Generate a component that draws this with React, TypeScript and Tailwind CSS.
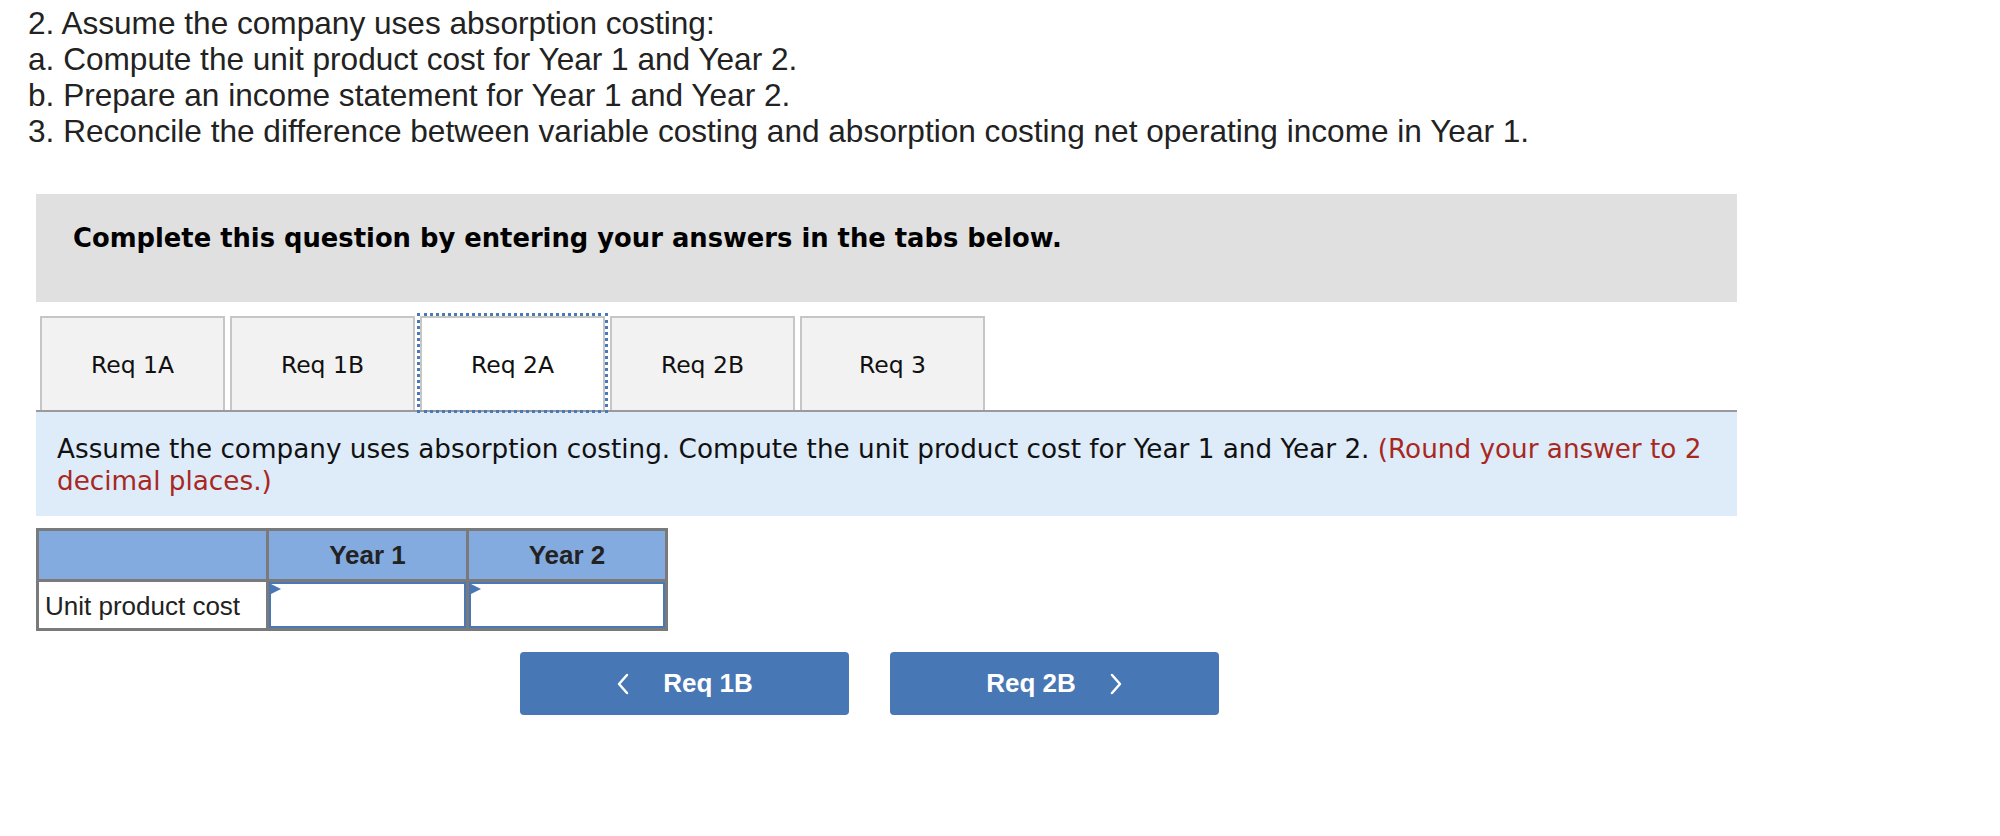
import React from "react";

function Chevron({ dir }: { dir: "left" | "right" }) {
  return (
    <svg width="14" height="22" viewBox="0 0 14 22" fill="none">
      {dir === "left" ? (
        <polyline points="11,2 3,11 11,20" stroke="white" strokeWidth="2.5" strokeLinecap="round" strokeLinejoin="round" />
      ) : (
        <polyline points="3,2 11,11 3,20" stroke="white" strokeWidth="2.5" strokeLinecap="round" strokeLinejoin="round" />
      )}
    </svg>
  );
}

function Tab({ label, active }: { label: string; active?: boolean }) {
  return (
    <div
      className={
        active
          ? "flex h-[94px] w-[185px] items-center justify-center border-2 border-b-0 border-[#c6c6c6] bg-white pt-[4px] outline-[3px] outline-dotted outline-[#4a78b8] outline-offset-0"
          : "flex h-[94px] w-[185px] items-center justify-center border-2 border-b-0 border-[#c6c6c6] bg-[#f2f2f2] pt-[4px]"
      }
    >
      <span className="font-['DejaVu_Sans',Verdana,sans-serif] text-[23.5px] text-[#111]">{label}</span>
    </div>
  );
}

function InputCell() {
  return (
    <div className="relative h-full w-full border-2 border-[#4a78b5] bg-white">
      <div className="absolute left-0 top-0 h-0 w-0 border-y-[5px] border-l-[10px] border-y-transparent border-l-[#4a78b5]" />
    </div>
  );
}

export default function App() {
  return (
    <div className="min-h-[836px] w-[2000px] bg-white">
      <div className="pl-[28px] pt-[5px] font-['Liberation_Sans',Arial,sans-serif] text-[31.6px] leading-[36px] text-[#222]">
        <div>2. Assume the company uses absorption costing:</div>
        <div>a. Compute the unit product cost for Year 1 and Year 2.</div>
        <div>b. Prepare an income statement for Year 1 and Year 2.</div>
        <div>3. Reconcile the difference between variable costing and absorption costing net operating income in Year 1.</div>
      </div>

      <div className="ml-[36px] mt-[45px] w-[1701px]">
        <div className="h-[108px] bg-[#e0e0e0] pl-[37px] pt-[28px]">
          <div className="font-['DejaVu_Sans',Verdana,sans-serif] text-[25.8px] font-bold leading-[32px] text-black">
            Complete this question by entering your answers in the tabs below.
          </div>
        </div>

        <div className="mt-[14px] flex gap-[5px] border-b-2 border-[#9a9a9a] pl-[4px]">
          <Tab label="Req 1A" />
          <Tab label="Req 1B" />
          <Tab label="Req 2A" active />
          <Tab label="Req 2B" />
          <Tab label="Req 3" />
        </div>

        <div className="bg-[#deebf8] pb-[19px] pl-[21px] pr-[20px] pt-[21px] font-['DejaVu_Sans',Verdana,sans-serif] text-[26.25px] leading-[32px] text-[#111]">
          <p>
            Assume the company uses absorption costing. Compute the unit product cost for Year 1 and Year 2.{" "}
            <span className="text-[#a8281f]">(Round your answer to 2 decimal places.)</span>
          </p>
        </div>

        <div className="mt-[12px] w-[632px] border-[3px] border-[#7a7a7a] font-['Liberation_Sans',Arial,sans-serif] text-[26px] text-[#222]">
          <div className="flex h-[48px] bg-[#84abdf] font-bold">
            <div className="w-[227px]" />
            <div className="w-[3px] bg-[#7a7a7a]" />
            <div className="flex w-[197px] items-center justify-center">Year 1</div>
            <div className="w-[3px] bg-[#7a7a7a]" />
            <div className="flex flex-1 items-center justify-center">Year 2</div>
          </div>
          <div className="h-[3px] bg-[#7a7a7a]" />
          <div className="flex h-[46px] bg-white">
            <div className="flex w-[227px] items-center pl-[6px] pt-[2px]">Unit product cost</div>
            <div className="w-[3px] bg-[#7a7a7a]" />
            <div className="w-[197px]">
              <InputCell />
            </div>
            <div className="w-[3px] bg-[#7a7a7a]" />
            <div className="flex-1">
              <InputCell />
            </div>
          </div>
        </div>

        <div className="mt-[21px] flex gap-[41px] pl-[484px] font-['Liberation_Sans',Arial,sans-serif] text-[26px] font-bold text-white">
          <div className="flex h-[63px] w-[329px] items-center justify-center gap-[33px] rounded-[4px] bg-[#4877b5]">
            <Chevron dir="left" />
            <span>Req 1B</span>
          </div>
          <div className="flex h-[63px] w-[329px] items-center justify-center gap-[33px] rounded-[4px] bg-[#4877b5]">
            <span>Req 2B</span>
            <Chevron dir="right" />
          </div>
        </div>
      </div>
    </div>
  );
}
